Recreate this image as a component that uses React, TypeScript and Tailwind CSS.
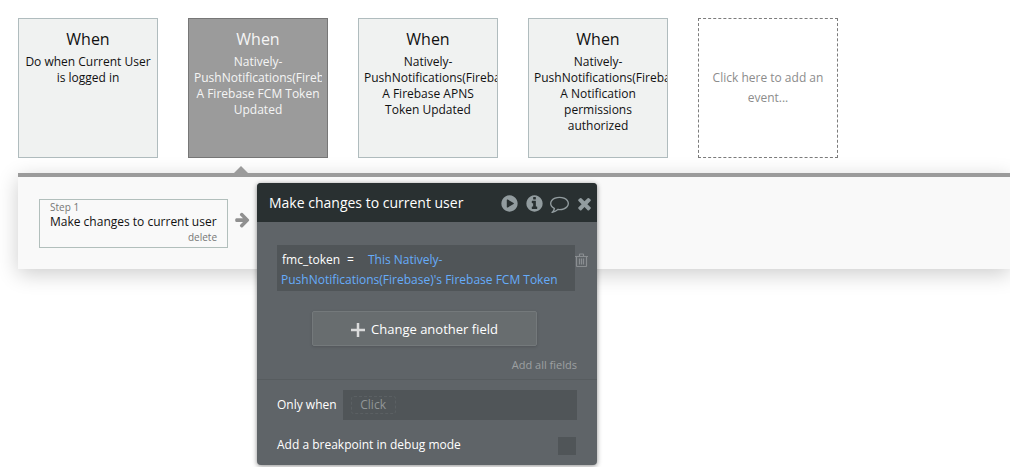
import { useState } from "react";
import clsx from "clsx";

const PATHS = {
  play: "M896 128q209 0 385.5 103t279.5 279.5 103 385.5-103 385.5-279.5 279.5-385.5 103-385.5-103-279.5-279.5-103-385.5 103-385.5 279.5-279.5 385.5-103zm384 823q32-18 32-55t-32-55l-544-320q-31-19-64-1-32 19-32 56v640q0 37 32 56 16 8 32 8 17 0 32-9z",
  info: "M1152 1376v-160q0-14-9-23t-23-9h-96v-512q0-14-9-23t-23-9h-320q-14 0-23 9t-9 23v160q0 14 9 23t23 9h96v320h-96q-14 0-23 9t-9 23v160q0 14 9 23t23 9h448q14 0 23-9t9-23zm-128-896v-160q0-14-9-23t-23-9h-192q-14 0-23 9t-9 23v160q0 14 9 23t23 9h192q14 0 23-9t9-23zm640 416q0 209-103 385.5t-279.5 279.5-385.5 103-385.5-103-279.5-279.5-103-385.5 103-385.5 279.5-279.5 385.5-103 385.5 103 279.5 279.5 103 385.5z",
  comment:
    "M896 384q-204 0-381.5 69.5t-282 187.5-104.5 255q0 112 71.5 213.5t201.5 175.5l87 50-27 96q-24 91-70 172 152-63 275-171l43-38 57 6q69 8 130 8 204 0 381.5-69.5t282-187.5 104.5-255-104.5-255-282-187.5-381.5-69.5zm896 512q0 174-120 321.5t-326 233-450 85.5q-70 0-145-8-198 175-460 242-49 14-114 22h-5q-15 0-27-10.5t-16-27.5v-1q-3-4-.5-12t2-10 4.5-9.5l6-9 7-8.5 8-9q7-8 31-34.5t34.5-38 31-39.5 32.5-51 27-59 26-76q-157-89-247.5-220t-90.5-281q0-174 120-321.5t326-233 450-85.5 450 85.5 326 233 120 321.5z",
  close:
    "M1490 1322q0 40-28 68l-136 136q-28 28-68 28t-68-28l-294-294-294 294q-28 28-68 28t-68-28l-136-136q-28-28-28-68t28-68l294-294-294-294q-28-28-28-68t28-68l136-136q28-28 68-28t68 28l294 294 294-294q28-28 68-28t68 28l136 136q28 28 28 68t-28 68l-294 294 294 294q28 28 28 68z",
  arrow:
    "M1600 960q0 54-37 91l-651 651q-39 37-91 37-51 0-90-37l-75-75q-38-38-38-91t38-91l293-293h-704q-52 0-84.5-37.5t-32.5-90.5v-128q0-53 32.5-90.5t84.5-37.5h704l-293-294q-38-36-38-90t38-90l75-75q38-38 90-38 53 0 91 38l651 651q37 35 37 90z",
};

function Icon({ name, className }: { name: keyof typeof PATHS; className: string }) {
  return (
    <svg viewBox="0 0 1792 1792" fill="currentColor" aria-hidden="true" className={className}>
      <path d={PATHS[name]} />
    </svg>
  );
}

function TrashIcon() {
  return (
    <svg viewBox="0 0 13 15" fill="none" stroke="currentColor" aria-hidden="true" className="h-[15px] w-[13px]">
      <path d="M0 3.5H13M4.5 3V1.5Q4.5 1 5 1H8Q8.500 1 8.500 1.500V3" strokeWidth="1.200" />
      <path d="M1.500 3.500V13Q1.500 13.500 2 13.500H11Q11.500 13.500 11.500 13V3.500" strokeWidth="1.200" />
      <path d="M4.500 5.500V11.500M6.500 5.500V11.500M8.500 5.500V11.500" strokeWidth="1.200" />
    </svg>
  );
}

const EVENTS = [
  "Do when Current User is logged in",
  "Natively-PushNotifications(Firebase) A Firebase FCM Token Updated",
  "Natively-PushNotifications(Firebase) A Firebase APNS Token Updated",
  "Natively-PushNotifications(Firebase) A Notification permissions authorized",
];

function EventCard({ text, selected, onSelect }: { text: string; selected: boolean; onSelect: () => void }) {
  return (
    <button
      type="button"
      onClick={onSelect}
      className={clsx(
        "flex size-[140px] shrink-0 flex-col overflow-hidden border px-[5px] pt-2 text-center",
        selected ? "border-[#777777] bg-[#9b9b9b] text-[#f5f5f5]" : "border-[#b0bcbe] bg-[#f0f2f1] text-[#111111]",
      )}
    >
      <span className="w-full text-base">When</span>
      <span className={clsx("mt-[3px] w-full text-xs", selected && "overflow-hidden")}>{text}</span>
    </button>
  );
}

function ActionEditor() {
  return (
    <section
      aria-label="Make changes to current user"
      className="absolute top-[6px] left-[239px] w-[340px] rounded-[4px] bg-[#5f6468] text-xs text-white shadow-[0_1px_5px_rgba(0,0,0,0.45)]"
    >
      <header className="flex h-[39px] items-center rounded-t-[4px] bg-[#293031] pr-[3px] pl-3">
        <h2 className="flex-1 text-sm">Make changes to current user</h2>
        <div className="flex items-center gap-[6px] pt-[2px] text-[#929c9f]">
          <button type="button" aria-label="Run"><Icon name="play" className="size-[19px]" /></button>
          <button type="button" aria-label="Info"><Icon name="info" className="size-[19px]" /></button>
          <button type="button" aria-label="Comment"><Icon name="comment" className="size-[19px]" /></button>
          <button type="button" aria-label="Close"><Icon name="close" className="size-[19px]" /></button>
        </div>
      </header>

      <div className="px-5 pt-[23px] pb-1">
        <div className="-mr-4 flex items-start">
          <p className="w-[298px] shrink-0 bg-[#505558] px-1 pt-[5px] pb-[1px] leading-5">
            <span className="ml-[1px]">fmc_token</span>
            <span className="mx-[7px]">=</span>
            <a href="#value" className="ml-[7px] text-[#66acfa]">
              This Natively-PushNotifications(Firebase)'s Firebase FCM Token
            </a>
          </p>
          <button type="button" aria-label="Delete field" className="mt-2 w-[13px] shrink-0 text-[#8a8e91]">
            <TrashIcon />
          </button>
        </div>
        <button
          type="button"
          className="mt-5 ml-[35px] flex h-[35px] w-[225px] items-center justify-center gap-[6px] rounded-[2px] border border-[#74797b] bg-[#686d6f] pt-[2px] text-[13px] shadow-[0_1px_3px_rgba(0,0,0,0.15)]"
        >
          <svg viewBox="0 0 14 14" aria-hidden="true" className="size-[14px]">
            <path d="M7 0V14M0 7H14" stroke="#dadbdb" strokeWidth="2.500" />
          </svg>
          Change another field
        </button>
        <div className="mt-[10px] flex justify-end">
          <button type="button" className="text-[11px] leading-[18px] text-[#9da0a2]">Add all fields</button>
        </div>
      </div>

      <div className="mt-[1px] border-t border-[#575c5f] px-5 py-[10px]">
        <div className="flex items-center">
          <span className="shrink-0">Only when</span>
          <div className="ml-[6px] flex h-[30px] flex-1 items-center bg-[#505558] pl-2">
            <button type="button" className="h-[18px] w-[45px] rounded-[3px] border border-dashed border-[#5b6063] text-[#929597]">
              Click
            </button>
          </div>
        </div>
        <div className="mt-[15px] flex items-center">
          <label htmlFor="breakpoint" className="flex-1">Add a breakpoint in debug mode</label>
          <input
            id="breakpoint"
            type="checkbox"
            className="mt-[2px] mr-[1px] size-[18px] appearance-none bg-[#505558] checked:bg-[#62a8f5]"
          />
        </div>
      </div>
    </section>
  );
}

export default function App() {
  const [selected, setSelected] = useState(1);

  return (
    <main className="min-h-screen overflow-hidden bg-white pb-[198px] font-['Open_Sans',sans-serif]">
      <div className="flex gap-[30px] pt-[18px] pl-[18px]">
        {EVENTS.map((text, index) => (
          <EventCard key={text} text={text} selected={index === selected} onSelect={() => setSelected(index)} />
        ))}
        <button
          type="button"
          className="size-[140px] shrink-0 border border-dashed border-[#7c7c7c] px-2 text-xs leading-5 text-[#8c8c8c]"
        >
          Click here to add an event...
        </button>
      </div>

      <section
        aria-label="Workflow steps"
        className="relative mt-[15px] ml-[18px] flex items-start border-t-4 border-[#9b9b9b] bg-[#f9f9f9] px-[21px] pt-[22px] pb-[21px] shadow-[0_5px_20px_rgba(0,0,0,0.2)]"
      >
        <svg viewBox="0 0 16 8" aria-hidden="true" className="absolute -top-[11px] left-[215px] h-2 w-4">
          <path d="M0 8 8 0l8 8z" fill="#9b9b9b" />
        </svg>
        <div className="flex w-[189px] flex-col border border-[#b2bfbc] px-[10px] pb-[2px] text-[10px] leading-[15px] text-[#767676]">
          <span>Step 1</span>
          <span className="text-xs leading-[14px] whitespace-nowrap text-[#111111]">Make changes to current user</span>
          <button type="button" className="mt-[1px] self-end">delete</button>
        </div>
        <Icon name="arrow" className="mt-3 ml-[6px] size-[17px] text-[#909090]" />
        <ActionEditor />
      </section>
    </main>
  );
}
